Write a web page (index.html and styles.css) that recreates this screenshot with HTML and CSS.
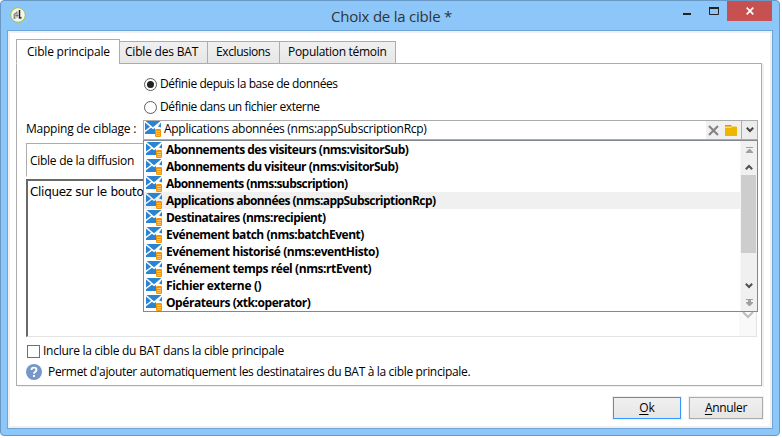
FILE: index.html
```html
<!DOCTYPE html>
<html lang="fr">
<head>
<meta charset="utf-8">
<title>Choix de la cible</title>
<link rel="stylesheet" href="styles.css">
</head>
<body>
<svg class="defs" width="0" height="0">
  <symbol id="mail" viewBox="0 0 16 16">
    <path fill="#2b84d2" d="M.5 0h15L8 6.300zM0 1.500l5 4.300-5 3.700zM16 1.500v5l-3-1zM0 13v-1.800l6-4.500 2 1.500 2-1.200V13z"/>
    <rect x="10" y="8" width="6" height="8" rx="1.200" fill="#f29400"/>
    <path stroke="#ffd391" stroke-width=".8" d="M11 10.500h4M11 12.500h4M11 14.300h4"/>
  </symbol>
</svg>
<div class="window">
  <header class="titlebar">
    <svg class="logo" width="16" height="16" viewBox="0 0 16 16"><circle cx="8" cy="8" r="7.300" fill="#f4f6ef" stroke="#9bc53e"/><path d="M3.500 12V7L7 4.500V6L5.500 7.500V12z" fill="#8c8d89"/><path d="M9.500 3v6.500q0 2 2 1" fill="none" stroke="#222" stroke-width="1.500"/><path d="M7 4.500v6M5.500 8.500h3M8.500 11l2 1" stroke="#777" fill="none"/></svg>
    <h1><span class="t-title">Choix de la cible *</span></h1>
    <div class="controls">
      <svg width="36" height="20" viewBox="0 0 36 20"><path d="M0 12h8v2H0z" fill="#222"/><path d="M26.500 7v6.500h9V7" fill="none" stroke="#222"/><path d="M26 6h10v2H26z" fill="#222"/></svg>
      <div class="close"><svg width="8" height="8" viewBox="0 0 8 8"><path d="M.7.7l6.600 6.600M7.300.7.7 7.300" stroke="#fff" stroke-width="1.700"/></svg></div>
    </div>
  </header>
  <main class="client">
    <nav class="tabs">
      <div class="tab active"><span class="t-tab1">Cible principale</span></div>
      <div class="tab bat"><span class="t-tab2">Cible des BAT</span></div>
      <div class="tab excl"><span class="t-tab3">Exclusions</span></div>
      <div class="tab pop"><span class="t-tab4">Population témoin</span></div>
    </nav>
    <section class="panel">
      <div class="radio"><i class="dot on"></i><span class="t-r1">Définie depuis la base de données</span></div>
      <div class="radio second"><i class="dot"></i><span class="t-r2">Définie dans un fichier externe</span></div>
      <div class="mapping">
        <label><span class="t-map">Mapping de ciblage :</span></label>
        <div class="combo">
          <svg class="mail" width="16" height="16"><use href="#mail"/></svg>
          <span class="t-combo">Applications abonnées (nms:appSubscriptionRcp)</span>
          <div class="tools">
            <svg width="11" height="11" viewBox="0 0 11 11"><path d="M1 1l9 9M10 1l-9 9" stroke="#858585" stroke-width="2.200"/></svg>
            <svg width="12" height="11" viewBox="0 0 12 11"><path d="M0 0h6l1 1.500H0z" fill="#f28d00"/><path d="M0 1.500h12V11H0z" fill="#efb600"/><path d="M0 2.500h6.500l1-1H12" fill="none" stroke="#f6d985"/></svg>
          </div>
          <div class="drop"><svg width="8" height="6" viewBox="0 0 8 6"><path d="M.8.7 4 4l3.200-3.300" fill="none" stroke="#444" stroke-width="2"/></svg></div>
          <div class="menu">
            <ul>
              <li><svg width="16" height="16"><use href="#mail"/></svg><span class="l0">Abonnements des visiteurs (nms:visitorSub)</span></li>
              <li><svg width="16" height="16"><use href="#mail"/></svg><span class="l1">Abonnements du visiteur (nms:visitorSub)</span></li>
              <li><svg width="16" height="16"><use href="#mail"/></svg><span class="l2">Abonnements (nms:subscription)</span></li>
              <li class="sel"><svg width="16" height="16"><use href="#mail"/></svg><span class="l3">Applications abonnées (nms:appSubscriptionRcp)</span></li>
              <li><svg width="16" height="16"><use href="#mail"/></svg><span class="l4">Destinataires (nms:recipient)</span></li>
              <li><svg width="16" height="16"><use href="#mail"/></svg><span class="l5">Evénement batch (nms:batchEvent)</span></li>
              <li><svg width="16" height="16"><use href="#mail"/></svg><span class="l6">Evénement historisé (nms:eventHisto)</span></li>
              <li><svg width="16" height="16"><use href="#mail"/></svg><span class="l7">Evénement temps réel (nms:rtEvent)</span></li>
              <li><svg width="16" height="16"><use href="#mail"/></svg><span class="l8">Fichier externe ()</span></li>
              <li><svg width="16" height="16"><use href="#mail"/></svg><span class="l9">Opérateurs (xtk:operator)</span></li>
            </ul>
            <div class="scroll">
              <div class="edge"><svg width="7" height="6" viewBox="0 0 7 6"><path d="M0 0h7v1H0zM3 2h1l3 3v1H0V5z" fill="#a0a0a0"/></svg></div>
              <div class="arrow"><svg width="8" height="6" viewBox="0 0 8 6"><path d="M.8 5.300 4 2l3.200 3.300" fill="none" stroke="#505050" stroke-width="2"/></svg></div>
              <div class="thumb"></div>
              <div class="arrow down"><svg width="8" height="6" viewBox="0 0 8 6"><path d="M.8.7 4 4l3.200-3.300" fill="none" stroke="#505050" stroke-width="2"/></svg></div>
              <div class="edge"><svg width="7" height="7" viewBox="0 0 7 7"><path d="M0 0h7v1H0zM2 1h3v2h2v1L4 7H3L0 4V3h2z" fill="#a0a0a0"/></svg></div>
            </div>
          </div>
        </div>
      </div>
      <div class="group"><span class="t-group">Cible de la diffusion</span></div>
      <div class="memo"><span class="t-memo">Cliquez sur le bouto</span>
        <div class="memobar"><svg width="12" height="8" viewBox="0 0 12 8"><path d="M1 1l5 5 5-5" fill="none" stroke="#bdbdbd" stroke-width="2"/></svg></div>
      </div>
      <div class="check"><i></i><span class="t-check">Inclure la cible du BAT dans la cible principale</span></div>
      <div class="help">
        <svg width="16" height="16" viewBox="0 0 16 16"><circle cx="8" cy="8" r="8" fill="#7797c8"/><path d="M5.500 6Q5.500 3.700 8 3.700T10.500 6Q10.500 7 9 7.900 8 8.500 8 9.800" fill="none" stroke="#fff" stroke-width="1.800"/><path d="M7 11h2v2H7z" fill="#fff"/></svg>
        <span class="t-help">Permet d'ajouter automatiquement les destinataires du BAT à la cible principale.</span>
      </div>
    </section>
    <footer class="actions">
      <div class="btn ok"><span class="t-ok"><u>O</u>k</span></div>
      <div class="btn cancel"><span class="t-cancel"><u>A</u>nnuler</span></div>
    </footer>
  </main>
</div>
</body>
</html>
```
FILE: styles.css
```css
* { box-sizing: border-box; }
body { margin: 0; width: 782px; height: 438px; overflow: hidden; background: #fff; color: #000; font: 12px/16px "Open Sans", "Noto Sans", sans-serif; }
span { white-space: nowrap; }
svg { display: block; flex: none; }
.defs { position: absolute; }
.window { width: 780px; height: 436px; border: 1px solid #6899c6; border-radius: 4px; background: #8dc7f9; padding: 0 6px; }
.titlebar { height: 29px; display: flex; position: relative; }
.logo { margin: 6px 0 0 3px; }
h1 { flex: 1; margin: 5px 0 0; padding-left: 305px; font-size: 15px; line-height: 20px; font-weight: 400; color: #333; }
.controls { display: flex; height: 20px; }
.controls > svg { margin-right: 8px; }
.close { width: 45px; height: 20px; margin-right: 1px; background: #c75050; display: flex; align-items: center; justify-content: center; }
.client { height: 399px; border: 1px solid #6fa5d6; background: #fff; box-shadow: inset 0 0 0 2px #f0f0f0; padding: 8px 8px 0; display: flex; flex-direction: column; }
.tabs { display: flex; height: 25px; align-items: flex-end; position: relative; margin-bottom: -1px; }
.tab { height: 23px; border: 1px solid #acacac; margin-left: -1px; background: linear-gradient(#f0f0f0, #e7e7e7); padding: 2px 0 0 5px; }
.tab.active { width: 104px; height: 25px; margin: 0; background: #fff; border-bottom-color: #fff; padding: 4px 0 0 10px; }
.bat { width: 89px; } .excl { width: 73px; padding-left: 8px; } .pop { width: 117px; padding-left: 8px; }
.panel { width: 746px; height: 323px; border: 1px solid #acacac; box-shadow: 2px 1px 0 #f0f0f0; padding: 12px 3px 0 9px; }
.radio { display: flex; align-items: center; height: 16px; margin-left: 118px; gap: 4px; }
.radio.second { margin-top: 7px; margin-bottom: 5px; }
.dot { width: 13px; height: 13px; margin-right: -1px; border: 1px solid #5c5c5c; border-radius: 50%; display: flex; align-items: center; justify-content: center; }
.dot.on::after { content: ""; width: 7px; height: 7px; border-radius: 50%; background: #222; }
.mapping { display: flex; height: 21px; }
.mapping label { width: 117px; padding-top: 1px; }
.combo { position: relative; display: flex; width: 615px; height: 20px; border: 1px solid #ababab; background: #fff; }
.mail { margin: 0 3px 0 1px; }
.tools { margin-left: auto; width: 35px; display: flex; align-items: center; background: #f0f0f0; gap: 6px; padding-left: 2px; }
.drop { width: 17px; height: 20px; margin: -1px -1px 0 0; border: 1px solid #acacac; background: #ececec; display: flex; align-items: center; justify-content: center; }
.menu { position: absolute; left: -1px; top: 19px; width: 615px; height: 172px; display: flex; background: #fff; border: 1px solid #828790; z-index: 2; }
ul { list-style: none; margin: 0; padding: 0; flex: 1; }
li { height: 17px; display: flex; align-items: flex-start; gap: 4px; padding: 1px 0 0 2px; font-weight: 700; }
.sel { background: #f0f0f0; }
.scroll { width: 17px; display: flex; flex-direction: column; background: #f0f0f0; border-left: 1px solid #f6f6f6; }
.edge, .arrow { height: 17px; display: flex; align-items: center; justify-content: center; }
.thumb { width: 15px; height: 78px; background: #cdcdcd; }
.down { margin-top: auto; }
.group { width: 731px; height: 34px; margin-top: 2px; border: 1px solid #acacac; border-bottom-color: #fff; padding: 9px 0 0 3px; }
.memo { width: 731px; height: 158px; margin-top: 2px; border-left: 2px solid #696969; border-top: 2px solid #696969; border-right: 1px solid #e3e3e3; border-bottom: 1px solid #e3e3e3; padding: 3px 0 0 2px; display: flex; justify-content: space-between; font-family: "DejaVu Sans", sans-serif; }
.memobar { width: 17px; margin-top: -3px; background: #f9f9f9; padding: 130px 0 0 3px; }
.check { display: flex; height: 16px; margin-top: 6px; gap: 3px; align-items: center; padding-left: 1px; }
.check i { width: 13px; height: 13px; border: 1px solid #707070; }
.help { display: flex; margin-top: 5px; gap: 6px; }
.actions { display: flex; gap: 8px; justify-content: flex-end; margin: 11px 1px 0 0; }
.btn { height: 22px; border: 1px solid #acacac; box-shadow: 0 0 0 1px #f0f0f0; background: linear-gradient(#f0f0f0, #e5e5e5); text-align: center; padding-top: 2px; }
.ok { width: 68px; border-color: #3399ff; } .cancel { width: 74px; }
u { text-underline-offset: 2px; }
/* per-label tracking */
.t-title { letter-spacing: -.22px; }
.t-tab1, .t-tab2 { letter-spacing: -.2px; }
.t-tab3 { letter-spacing: -.4px; }
.t-tab4 { letter-spacing: -.3px; }
.t-r1 { letter-spacing: -.42px; }
.t-r2 { letter-spacing: -.39px; }
.t-map { letter-spacing: -.23px; }
.t-combo { letter-spacing: -.29px; }
.t-group { letter-spacing: -.28px; }
.t-check { letter-spacing: -.26px; }
.t-help { letter-spacing: -.335px; }
.t-memo { letter-spacing: -.3px; }
.t-cancel { letter-spacing: -.3px; }
.l0, .l1 { letter-spacing: -.5px; }
.l2 { letter-spacing: -.58px; }
.l3 { letter-spacing: -.56px; }
.l4 { letter-spacing: -.52px; }
.l5 { letter-spacing: -.47px; }
.l6 { letter-spacing: -.45px; }
.l7 { letter-spacing: -.42px; }
.l8 { letter-spacing: -.35px; }
.l9 { letter-spacing: -.45px; }
```
